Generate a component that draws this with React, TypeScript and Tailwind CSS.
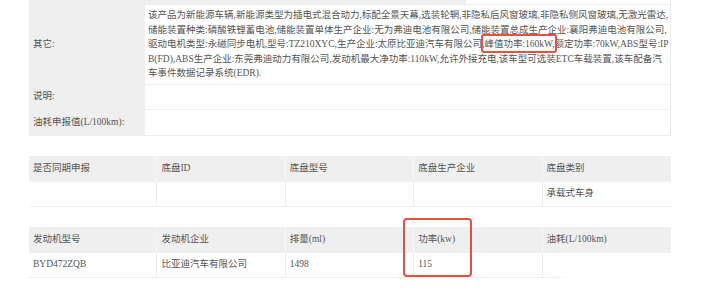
const lines = [
  "该产品为新能源车辆,新能源类型为插电式混合动力,标配全景天幕,选装轮辋,非隐私后风窗玻璃,非隐私侧风窗玻璃,无激光雷达,",
  "储能装置种类:磷酸铁锂蓄电池,储能装置单体生产企业:无为弗迪电池有限公司,储能装置总成生产企业:襄阳弗迪电池有限公司,",
  "驱动电机类型:永磁同步电机,型号:TZ210XYC,生产企业:太原比亚迪汽车有限公司,峰值功率:160kW,额定功率:70kW,ABS型号:IP",
  "B(FD),ABS生产企业:东莞弗迪动力有限公司,发动机最大净功率:110kW,允许外接充电,该车型可选装ETC车载装置,该车配备汽",
  "车事件数据记录系统(EDR).",
];

const chassisHead = ["是否同期申报", "底盘ID", "底盘型号", "底盘生产企业", "底盘类别"];
const chassisRow = ["", "", "", "", "承载式车身"];
const engineHead = ["发动机型号", "发动机企业", "排量(ml)", "功率(kw)", "油耗(L/100km)"];
const engineRow = ["BYD472ZQB", "比亚迪汽车有限公司", "1498", "115", ""];

const font = { fontFamily: '"Liberation Serif", "Noto Sans CJK SC", serif' };

const Grid5 = ({ head, row, className }: { head: string[]; row: string[]; className: string }) => (
  <div className={"ml-[29px] w-[642px] " + className}>
    <div className="grid grid-cols-5 bg-[#efefef] h-[26px]">
      {head.map((h, i) => (
        <div key={i} className="flex items-center pl-[4px] border-r border-[#f7f7f7] last:border-r-0">
          {h}
        </div>
      ))}
    </div>
    <div className="grid grid-cols-5 h-[25px] border-b border-[#ececec]">
      {row.map((c, i) => (
        <div key={i} className="flex items-center pl-[4px] border-r border-[#ececec] last:border-r-0">
          {c}
        </div>
      ))}
    </div>
  </div>
);

export default function App() {
  return (
    <div className="relative w-[719px] h-[293px] bg-white text-[9.5px] text-[#555] overflow-hidden" style={font}>
      <div className="ml-[29px] w-[642px] border-r border-[#ececec]">
        <div className="grid grid-cols-[116px_1fr] h-[4px]">
          <div className="bg-[#efefef]" />
          <div className="flex">
            <div className="w-[321px] bg-[#efefef]" />
          </div>
        </div>
        <div className="grid grid-cols-[116px_1fr] border-b border-[#ececec] border-t">
          <div className="bg-[#efefef] flex items-center pl-[4px]">其它:</div>
          <div className="pl-[3px] py-[3px] leading-[14.5px] whitespace-nowrap">
            {lines.map((l, i) => (
              <div key={i}>{l}</div>
            ))}
          </div>
        </div>
        <div className="grid grid-cols-[116px_1fr] h-[25px] border-b border-[#ececec]">
          <div className="bg-[#efefef] flex items-center pl-[4px]">说明:</div>
          <div />
        </div>
        <div className="grid grid-cols-[116px_1fr] h-[26px] border-b border-[#ececec]">
          <div className="bg-[#efefef] flex items-center pl-[4px]">油耗申报值(L/100km):</div>
          <div />
        </div>
      </div>

      <Grid5 head={chassisHead} row={chassisRow} className="mt-[20px]" />
      <Grid5 head={engineHead} row={engineRow} className="mt-[20px]" />

      <div className="absolute left-[481px] top-[34px] w-[76px] h-[19px] border-2 border-[#e5503f] rounded-[3px]" />
      <div className="absolute left-[403px] top-[218px] w-[69px] h-[59px] border-2 border-[#e5503f] rounded-[4px]" />
      <div className="absolute left-[560px] top-[258px] w-[170px] h-[40px] bg-white blur-[6px]" />
    </div>
  );
}
